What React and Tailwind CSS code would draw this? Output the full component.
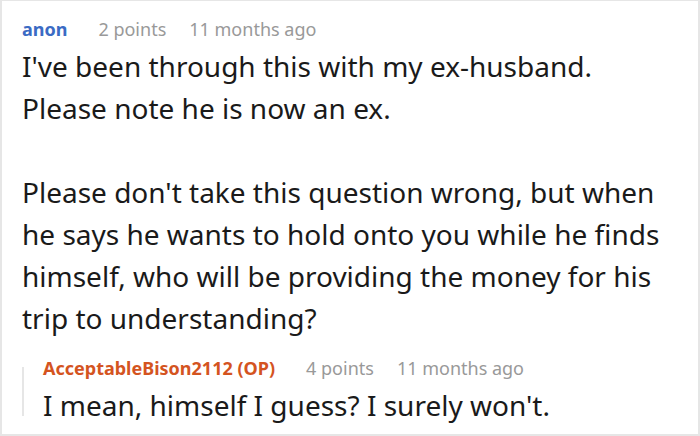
import React from 'react';

const font = { fontFamily: '"Noto Sans", "Open Sans", sans-serif' };

const Meta = ({ name, nameClass, points, time }) => (
  <div className="flex items-baseline text-[18px] leading-[27px]">
    <span className={`font-bold ${nameClass}`}>{name}</span>
    <span className="ml-[31px] text-[#999999]">{points}</span>
    <span className="ml-[23px] text-[#999999]">{time}</span>
  </div>
);

export default function App() {
  return (
    <div className="w-[700px] h-[436px] bg-white overflow-hidden" style={font}>
      <div className="h-full border-x-2 border-b-2 border-t border-[#e6e6e6] pl-[20px] pr-4 pt-[15px]">
        <Meta name="anon" nameClass="text-[#3b6bc4]" points="2 points" time="11 months ago" />
        <div className="mt-[2px] text-[28px] leading-[42px] text-[#1a1a1a]">
          <p>I've been through this with my ex-husband.</p>
          <p>Please note he is now an ex.</p>
          <p className="mt-[42px]">
            Please don't take this question wrong, but when he says he wants to hold onto you while he finds
            himself, who will be providing the money for his trip to understanding?
          </p>
        </div>
        <div className="mt-[16px] flex">
          <div className="w-[2px] bg-[#e6e6e6] mt-[12px] mb-[10px]" />
          <div className="pl-[19px]">
            <Meta name="AcceptableBison2112 (OP)" nameClass="text-[#d4541f]" points="4 points" time="11 months ago" />
            <p className="mt-[2px] text-[28px] leading-[42px] text-[#1a1a1a]">I mean, himself I guess? I surely won't.</p>
          </div>
        </div>
      </div>
    </div>
  );
}
